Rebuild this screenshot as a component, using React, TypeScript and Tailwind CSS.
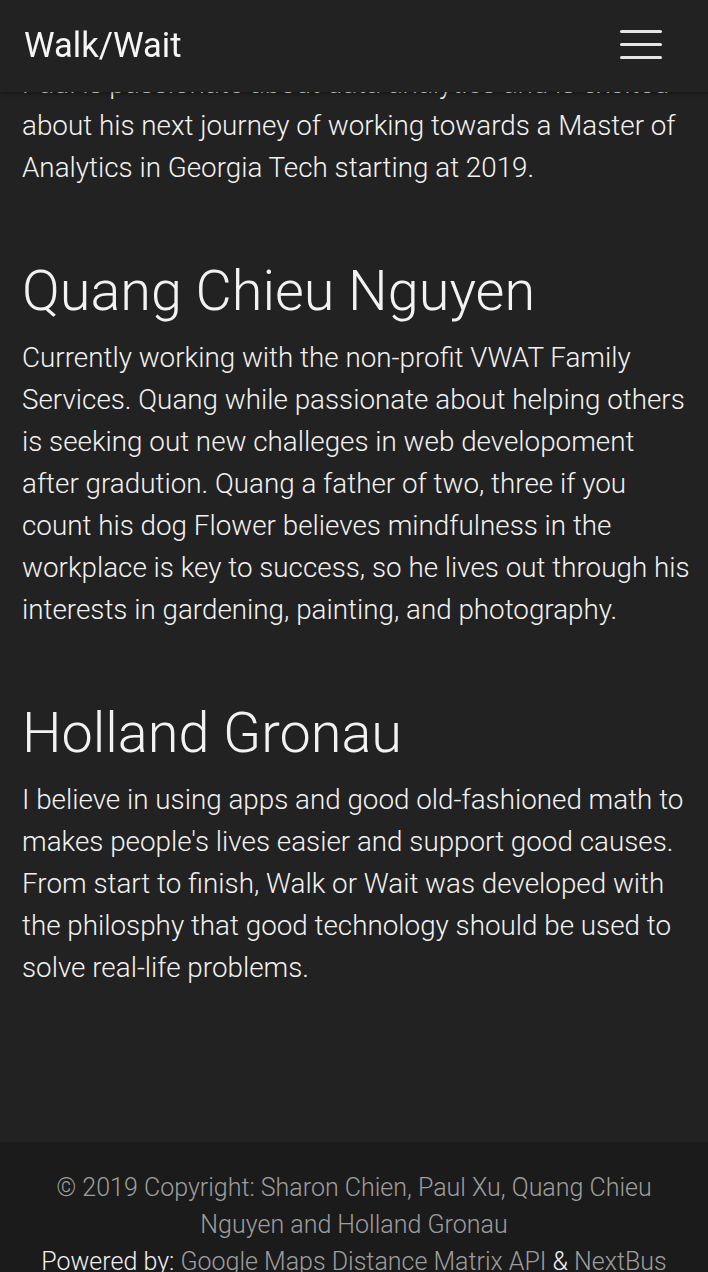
import React from 'react';

const bios = [
  {
    name: "Quang Chieu Nguyen",
    text: "Currently working with the non-profit VWAT Family Services. Quang while passionate about helping others is seeking out new challeges in web developoment after gradution. Quang a father of two, three if you count his dog Flower believes mindfulness in the workplace is key to success, so he lives out through his interests in gardening, painting, and photography.",
  },
  {
    name: "Holland Gronau",
    text: "I believe in using apps and good old-fashioned math to makes people's lives easier and support good causes. From start to finish, Walk or Wait was developed with the philosphy that good technology should be used to solve real-life problems.",
  },
];

const App: React.FC = () => {
  return (
    <div className="min-h-screen bg-[#222222] text-white font-['Roboto',sans-serif]">
      <header className="fixed top-0 left-0 right-0 z-10 h-[92px] bg-[#222222] shadow-[0_2px_4px_rgba(0,0,0,0.35)] flex items-center justify-between pl-[24px] pr-[46px]">
        <span className="text-[34.5px] font-normal text-[#f5f5f5]">Walk/Wait</span>
        <button className="flex flex-col gap-[10px] w-[42px] mb-[3px]" aria-label="menu">
          <span className="block h-[3px] w-full rounded-sm bg-[#e6e6e6]"></span>
          <span className="block h-[3px] w-full rounded-sm bg-[#e6e6e6]"></span>
          <span className="block h-[3px] w-full rounded-sm bg-[#e6e6e6]"></span>
        </button>
      </header>

      <main className="pt-[63px] pb-[153px] pl-[22px] pr-[14px] font-light text-[27.8px] leading-[42px] text-[#f2f2f2]">
        <p>
          Paul is passionate about data analytics and is excited about his next journey of working towards a Master of Analytics in Georgia Tech starting at 2019.
        </p>
        {bios.map((bio, i) => (
          <section key={i} className="mt-[72px]">
            <h2 className="text-[55.8px] leading-[60px] font-light mb-[16px]">{bio.name}</h2>
            <p>{bio.text}</p>
          </section>
        ))}
      </main>

      <footer className="bg-[#1b1b1b] pt-[27px] pb-[20px] px-[22px] text-center font-light text-[25px] leading-[37px]">
        <p className="text-[#9e9e9e]">
          © 2019 Copyright: Sharon Chien, Paul Xu, Quang Chieu Nguyen and Holland Gronau
        </p>
        <p className="text-[#f0f0f0]">
          Powered by: <a className="text-[#9e9e9e]">Google Maps Distance Matrix API</a> & <a className="text-[#9e9e9e]">NextBus</a>
        </p>
      </footer>
    </div>
  );
};

export default App;
